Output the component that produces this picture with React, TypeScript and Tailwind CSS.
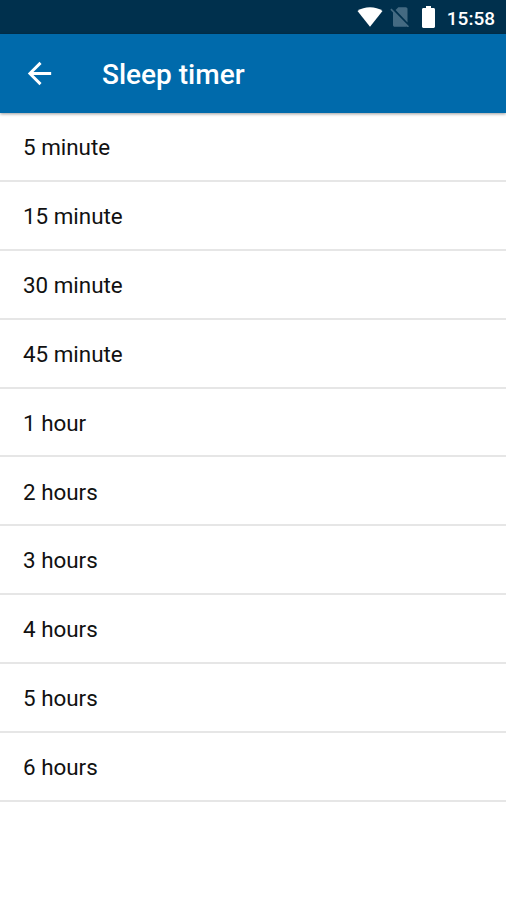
const timers = [
  '5 minute',
  '15 minute',
  '30 minute',
  '45 minute',
  '1 hour',
  '2 hours',
  '3 hours',
  '4 hours',
  '5 hours',
  '6 hours',
];

function StatusBar() {
  return (
    <div className="flex h-[34px] items-center justify-end bg-[#00304d] pr-[11px] text-white">
      <svg className="h-[20px] w-[26px]" viewBox="0 0 26 20" fill="currentColor">
        <path d="M13 19.800 0.500 4C4 1.400 8.300 0.200 13 0.200s9 1.200 12.500 3.800z" />
      </svg>
      <svg className="ml-[7px] h-[20px] w-[19px] text-[#446a82]" viewBox="0 0 19 20" fill="currentColor">
        <path d="M17.500 15.500V2c0-1-.8-1.800-1.800-1.800H8.300L5.600 3z" />
        <path d="M1.500 1.500.3 2.700 3 5.500V18c0 1 .8 1.800 1.800 1.800h11c.4 0 .7-.1 1-.3l1 1 1.200-1.200z" />
      </svg>
      <svg className="ml-[13px] h-[22px] w-[13px]" viewBox="0 0 13 21" preserveAspectRatio="none" fill="currentColor">
        <path d="M11.600 2H9V0H4v2H1.400C.6 2 0 2.600 0 3.400v16.200c0 .8.6 1.400 1.400 1.400h10.200c.8 0 1.400-.6 1.400-1.400V3.400C13 2.600 12.400 2 11.600 2z" />
      </svg>
      <span className="ml-[12px] pt-[2px] text-[19px] font-medium leading-none">15:58</span>
    </div>
  );
}

export default function App() {
  return (
    <div className="h-[900px] w-[506px] overflow-hidden bg-white font-['Roboto',sans-serif]">
      <StatusBar />
      <header className="relative flex h-[79px] items-center bg-[#006aab] pl-[22px] text-white shadow-[0_1px_3px_rgba(0,0,0,0.4)]">
        <svg className="size-[35px]" viewBox="0 0 24 24" fill="currentColor">
          <path d="M20 11H7.830l5.590-5.590L12 4l-8 8 8 8 1.410-1.410L7.830 13H20v-2z" />
        </svg>
        <h1 className="ml-[45px] pt-[3px] text-[28px] font-medium leading-none">Sleep timer</h1>
      </header>
      <ul>
        {timers.map((timer) => (
          <li key={timer} className="flex h-[68.900px] items-center border-b-2 border-[#e6e6e6] pt-[3px] pl-[23px] text-[22.400px] text-[#111]">
            {timer}
          </li>
        ))}
      </ul>
    </div>
  );
}
